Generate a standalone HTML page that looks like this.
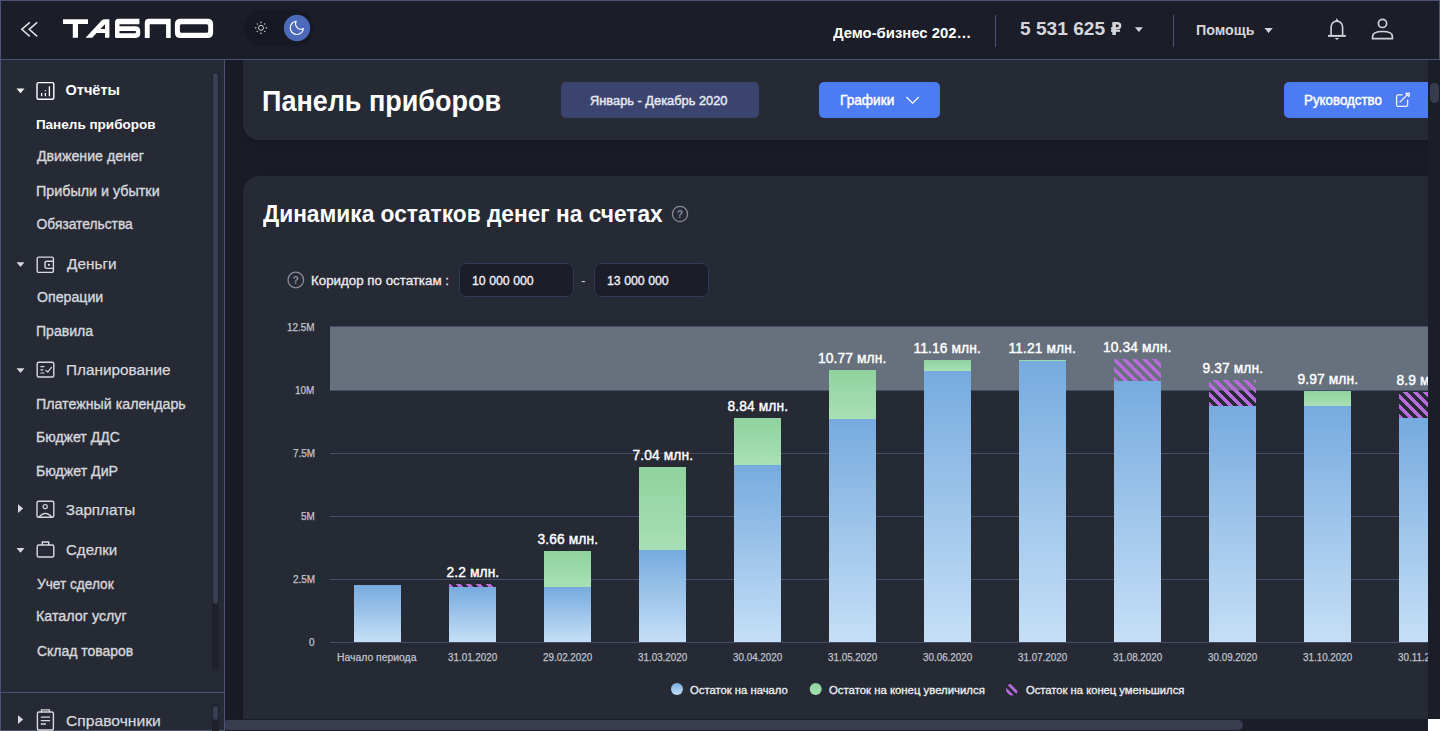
<!DOCTYPE html>
<html lang="ru">
<head>
<meta charset="utf-8">
<title>Табло — Панель приборов</title>
<style>
*{box-sizing:border-box;margin:0;padding:0}
html,body{width:1440px;height:731px;overflow:hidden;background:#1a1c28}
body{position:relative;font-family:"Liberation Sans",sans-serif;color:#fff}
.abs{position:absolute}
.t{position:absolute;line-height:1;white-space:nowrap;transform-origin:0 0}
/* header */
.header{position:absolute;left:0;top:0;width:1440px;height:60px;background:#1b1d29;box-shadow:inset 0 0 0 1px #4b5373}
.vdiv{position:absolute;width:1px;top:15px;height:32px;background:#4a5373}
/* sidebar */
.sidebar{position:absolute;left:0;top:60px;width:225px;height:671px;background:#262a35;box-shadow:inset 1px 0 #4b5373,inset -1px 0 #4b5373,inset 0 -1px #4b5373}
.sep{position:absolute;left:0;top:692px;width:224px;height:1px;background:#4b5373}
.strack{position:absolute;left:212px;width:7px;border-radius:4px;background:#1f222b}
.sthumb{position:absolute;left:213px;width:5px;border-radius:3px;background:#393e50}
/* main */
.clip{position:absolute;left:225px;top:60px;width:1203px;height:659px;overflow:hidden;background:#1a1c28}
.inner{position:absolute;left:-225px;top:-60px;width:1440px;height:731px}
.card{position:absolute;background:#262a35;box-shadow:0 3px 16px rgba(6,7,14,.2)}
.btn{position:absolute;border-radius:5px}
.inp{position:absolute;background:#1b1d29;border:1px solid #323953;border-radius:7px}
.grid{position:absolute;left:330px;width:1100px;height:1px;background:#464d6a}
.band{position:absolute;left:330px;top:327px;width:1100px;height:63px;background:#67717e}
.bar{position:absolute;width:47px}
.blue{background:linear-gradient(#76abdf,#c6dff6)}
.green{background:linear-gradient(#8fd39e,#a8e0b5)}
.hatch{background:repeating-linear-gradient(45deg,#b76ad9 0 3.5px,transparent 3.5px 7px)}
/* scrollbars */
.vscroll{position:absolute;left:1428px;top:60px;width:12px;height:659px;background:#1b1d29}
.hscroll{position:absolute;left:225px;top:719px;width:1203px;height:12px;background:#1b1d29}
.thumb{position:absolute;background:#373c4f;border-radius:6px}
.corner{position:absolute;left:1428px;top:719px;width:12px;height:12px;background:#ffffff}
svg{position:absolute;overflow:visible}
</style>
</head>
<body>
<header class="header">
  <svg style="left:0;top:0" width="1440" height="59" viewBox="0 0 1440 59">
    <g fill="none" stroke="#dcdcdc" stroke-width="1.6" stroke-linecap="square">
      <path d="M29.2 22.8 L21.8 29.3 L29.2 35.9"/>
      <path d="M36.6 22.8 L29.2 29.3 L36.6 35.9"/>
    </g>
    <g fill="#ffffff">
      <!-- Т -->
      <path d="M63 19.2 H88 V23.9 H78 V37.8 H72.8 V23.9 H63 Z"/>
      <!-- А -->
      <path fill-rule="evenodd" d="M85.6 37.8 L101.6 20.6 Q103 19.2 105 19.2 H109.4 V37.8 H105 V33 H96.6 L92.2 37.8 Z M100.4 28.9 L105 24.2 V28.9 Z"/>
      <!-- Б -->
      <path fill-rule="evenodd" d="M118.5 18.8 H139.4 V24.2 H119.5 V26.3 H135.5 Q140.2 26.3 140.2 31 V33.5 Q140.2 37.9 135.8 37.9 H116.5 Q115 37.9 115 36.4 V22.3 Q115 18.8 118.5 18.8 Z M119.5 31 V33.2 H135.8 V31 Z"/>
      <!-- П -->
      <path d="M149 18.8 H170.7 V37.9 H166.1 V24.2 H149.7 V37.9 H144.8 V23 Q144.8 18.8 149 18.8 Z"/>
      <!-- О -->
      <path fill-rule="evenodd" d="M180.5 18.8 H207.6 Q213.1 18.8 213.1 24.3 V32.4 Q213.1 37.9 207.6 37.9 H180.5 Q174.9 37.9 174.9 32.4 V24.3 Q174.9 18.8 180.5 18.8 Z M181.4 24.2 Q179.9 24.2 179.9 25.7 V31.2 Q179.9 32.7 181.4 32.7 H206.7 Q208.2 32.7 208.2 31.2 V25.7 Q208.2 24.2 206.7 24.2 Z"/>
    </g>
    <!-- theme toggle -->
    <rect x="243.5" y="10.5" width="70.5" height="35" rx="17.5" fill="#161822"/>
    <circle cx="261" cy="27.8" r="2.5" fill="none" stroke="#cfcfd4" stroke-width="1"/>
    <g fill="#bdbdc2">
      <rect x="260.3" y="21.6" width="1.4" height="1.5"/>
      <rect x="260.3" y="32.6" width="1.4" height="1.5"/>
      <rect x="254.9" y="27.1" width="1.5" height="1.4"/>
      <rect x="265.6" y="27.1" width="1.5" height="1.4"/>
      <circle cx="257.3" cy="24.1" r="0.75"/>
      <circle cx="264.7" cy="24.1" r="0.75"/>
      <circle cx="257.3" cy="31.5" r="0.75"/>
      <circle cx="264.7" cy="31.5" r="0.75"/>
    </g>
    <circle cx="297" cy="28" r="13.2" fill="#4b6ab9"/>
    <path d="M296.2 21.3 A6.6 6.6 0 1 0 303.4 28.6 A5.4 5.4 0 0 1 296.2 21.3 Z" fill="none" stroke="#ffffff" stroke-width="1.15" stroke-linejoin="round"/>
    <!-- carets -->
    <path d="M1134.9 27.2 H1142.9 L1138.9 32 Z" fill="#d6d6da"/>
    <path d="M1264.4 28 H1272.8 L1268.6 33 Z" fill="#d6d6da"/>
    <!-- ruble sign -->
    <g fill="none" stroke="#d6d6da">
      <path d="M1114.1 35 V22.1" stroke-width="3.6"/>
      <path d="M1114 23.3 H1117.2 Q1120.1 23.3 1120.1 25.8 Q1120.1 28.4 1117.2 28.4 H1111" stroke-width="2.4"/>
      <path d="M1111 30.8 H1120" stroke-width="2"/>
    </g>
    <!-- bell -->
    <g fill="none" stroke="#d2d2d6" stroke-width="1.6" stroke-linejoin="round">
      <path d="M1331.1 35.2 V26.9 A5.75 5.75 0 0 1 1342.6 26.9 V35.2"/>
      <path d="M1328 35.9 H1345.8" stroke-width="2"/>
    </g>
    <path d="M1335.4 21.2 L1336.9 17.9 L1338.4 21.2 Z" fill="#d2d2d6"/>
    <path d="M1334.6 38 H1339.2 L1336.9 40 Z" fill="#d2d2d6"/>
    <!-- user -->
    <g fill="none" stroke="#d2d2d6" stroke-width="1.7">
      <circle cx="1382.5" cy="23.4" r="4.1"/>
      <path d="M1372.6 38.7 V36.4 Q1372.6 31.5 1382.5 31.5 Q1392.4 31.5 1392.4 36.4 V38.7 Z"/>
    </g>
  </svg>
  <div class="vdiv" style="left:995px"></div>
  <div class="vdiv" style="left:1173px"></div>
  <span class="t" style="left:833.00px;top:25px;font-size:15.12px;font-weight:bold;color:#ffffff;transform:scaleX(0.9820);">Демо-бизнес 202…</span>
  <span class="t" style="left:1019.99px;top:20px;font-size:18.9px;font-weight:bold;color:#d6d6da;transform:scaleX(1.0120);">5 531 625</span>
  <span class="t" style="left:1196.05px;top:23px;font-size:14.97px;font-weight:bold;color:#d6d6da;transform:scaleX(0.9500);">Помощь</span>
</header>

<nav class="sidebar">
  <div class="strack" style="top:12px;height:599px"></div>
  <div class="sthumb" style="top:13px;height:531px"></div>
  <div class="strack" style="top:644px;height:40px"></div>
  <div class="sthumb" style="top:646px;height:14px"></div>
  <div class="sep" style="top:632px"></div>
</nav>
<div class="abs" style="left:0;top:0">
  <svg style="left:0;top:0" width="225" height="731" viewBox="0 0 225 731">
    <path d="M16.5 88.5 H24.5 L20.5 93.2 Z" fill="#f4f4f6"/>
    <g fill="#d8d9dd">
      <path d="M16.5 262.2 H24.5 L20.5 266.9 Z"/>
      <path d="M16.5 368.2 H24.5 L20.5 372.9 Z"/>
      <path d="M18 504.3 L23.2 508.6 L18 512.9 Z"/>
      <path d="M16.5 548 H24.5 L20.5 552.7 Z"/>
      <path d="M18 715.3 L23.2 719.6 L18 723.9 Z"/>
    </g>
    <g fill="none" stroke-width="1.4">
      <!-- reports icon -->
      <rect x="37" y="82.6" width="16.8" height="16.6" rx="1.5" stroke="#ffffff"/>
      <path d="M41.6 93 V96.3 M45.4 90.3 V91.3 M45.4 93 V96.3 M49.4 86.2 V96.3" stroke="#ffffff" stroke-width="1.3"/>
      <!-- wallet -->
      <rect x="37.2" y="257.1" width="16.2" height="15.3" rx="1.5" stroke="#d8d9dd"/>
      <path d="M53.8 261.2 H46.8 Q45 261.2 45 263 V266.6 Q45 268.4 46.8 268.4 H53.8" stroke="#d8d9dd"/>
      <circle cx="48.9" cy="264.8" r="1.1" fill="#d8d9dd" stroke="none"/>
      <!-- planning -->
      <rect x="37.2" y="362.2" width="16.6" height="14.8" rx="1.5" stroke="#d8d9dd"/>
      <path d="M40.4 366.6 H44.4 M40.4 369.8 H43.4 M40.4 373 H44.4 M45.6 370 L47.8 372.2 L51.6 367.2" stroke="#d8d9dd" stroke-width="1.2"/>
      <!-- salary -->
      <rect x="37" y="501.2" width="16.8" height="16" rx="1.5" stroke="#d8d9dd"/>
      <circle cx="45.2" cy="506.6" r="2.1" stroke="#d8d9dd" stroke-width="1.2"/>
      <path d="M38.8 517.2 Q45.4 509.6 52 517.2" stroke="#d8d9dd" stroke-width="1.3"/>
      <!-- briefcase -->
      <rect x="37.2" y="545" width="16.6" height="12" rx="1.5" stroke="#d8d9dd"/>
      <path d="M42.3 545 V542 H48.7 V545" stroke="#d8d9dd"/>
      <!-- clipboard -->
      <rect x="37.4" y="712" width="16" height="18" rx="1.5" stroke="#d8d9dd"/>
      <path d="M41.4 712.2 V709.8 H49.4 V712.2 M40.8 717.2 H50 M40.8 720.6 H50 M40.8 724 H46" stroke="#d8d9dd" stroke-width="1.3"/>
    </g>
  </svg>
  <span class="t" style="left:65.50px;top:83px;font-size:14.53px;font-weight:bold;color:#ffffff;">Отчёты</span>
  <span class="t" style="left:35.90px;top:118px;font-size:13.52px;font-weight:bold;color:#ffffff;">Панель приборов</span>
  <span class="t" style="left:36.60px;top:150px;font-size:13.81px;font-weight:normal;color:#d6d7db;transform:scaleX(1.0260);-webkit-text-stroke:0.35px currentColor">Движение денег</span>
  <span class="t" style="left:35.56px;top:185px;font-size:13.81px;font-weight:normal;color:#d6d7db;transform:scaleX(1.0373);-webkit-text-stroke:0.35px currentColor">Прибыли и убытки</span>
  <span class="t" style="left:36.60px;top:218px;font-size:13.81px;font-weight:normal;color:#d6d7db;-webkit-text-stroke:0.35px currentColor">Обязательства</span>
  <span class="t" style="left:36.60px;top:291px;font-size:13.81px;font-weight:normal;color:#d6d7db;transform:scaleX(1.0266);-webkit-text-stroke:0.35px currentColor">Операции</span>
  <span class="t" style="left:35.58px;top:325px;font-size:13.81px;font-weight:normal;color:#d6d7db;transform:scaleX(1.0200);-webkit-text-stroke:0.35px currentColor">Правила</span>
  <span class="t" style="left:35.57px;top:398px;font-size:13.81px;font-weight:normal;color:#d6d7db;transform:scaleX(1.0306);-webkit-text-stroke:0.35px currentColor">Платежный календарь</span>
  <span class="t" style="left:35.58px;top:431px;font-size:13.81px;font-weight:normal;color:#d6d7db;transform:scaleX(1.0173);-webkit-text-stroke:0.35px currentColor">Бюджет ДДС</span>
  <span class="t" style="left:35.57px;top:465px;font-size:13.81px;font-weight:normal;color:#d6d7db;transform:scaleX(1.0253);-webkit-text-stroke:0.35px currentColor">Бюджет ДиР</span>
  <span class="t" style="left:36.60px;top:578px;font-size:13.81px;font-weight:normal;color:#d6d7db;transform:scaleX(0.9897);-webkit-text-stroke:0.35px currentColor">Учет сделок</span>
  <span class="t" style="left:35.56px;top:610px;font-size:13.81px;font-weight:normal;color:#d6d7db;transform:scaleX(1.0356);-webkit-text-stroke:0.35px currentColor">Каталог услуг</span>
  <span class="t" style="left:36.60px;top:645px;font-size:13.81px;font-weight:normal;color:#d6d7db;transform:scaleX(1.0095);-webkit-text-stroke:0.35px currentColor">Склад товаров</span>
  <span class="t" style="left:66.70px;top:256px;font-size:15.26px;font-weight:normal;color:#d8d9dd;transform:scaleX(1.0061);-webkit-text-stroke:0.25px currentColor">Деньги</span>
  <span class="t" style="left:65.70px;top:362px;font-size:15.26px;font-weight:normal;color:#d8d9dd;transform:scaleX(1.0039);-webkit-text-stroke:0.25px currentColor">Планирование</span>
  <span class="t" style="left:65.70px;top:502px;font-size:15.26px;font-weight:normal;color:#d8d9dd;-webkit-text-stroke:0.25px currentColor">Зарплаты</span>
  <span class="t" style="left:65.71px;top:542px;font-size:15.26px;font-weight:normal;color:#d8d9dd;transform:scaleX(0.9860);-webkit-text-stroke:0.25px currentColor">Сделки</span>
  <span class="t" style="left:65.67px;top:713px;font-size:15.26px;font-weight:normal;color:#d8d9dd;transform:scaleX(1.0253);-webkit-text-stroke:0.25px currentColor">Справочники</span>
</div>

<main class="clip">
  <div class="inner">
    <section class="card" style="left:243px;top:20px;width:1250px;height:120px;border-radius:16px"></section>
    <div class="btn" style="left:561px;top:82px;width:198px;height:36px;background:#3a446f"></div>
    <div class="btn" style="left:819px;top:82px;width:121px;height:36px;background:#4b7cf3"></div>
    <div class="btn" style="left:1284px;top:82px;width:160px;height:36px;background:#4b7cf3"></div>
    <svg style="left:0;top:0" width="1440" height="731" viewBox="0 0 1440 731">
      <path d="M906.4 97 L912.6 103.2 L918.8 97" fill="none" stroke="#ffffff" stroke-width="1.1"/>
      <g fill="none" stroke="#f2f4ff" stroke-width="1.3" stroke-linejoin="round">
        <path d="M1402.7 94.9 H1398.2 Q1396.6 94.9 1396.6 96.5 V104.7 Q1396.6 106.3 1398.2 106.3 H1406 Q1407.6 106.3 1407.6 104.7 V99.8"/>
        <path d="M1399.6 102.4 L1407.4 94.6"/>
        <path d="M1405.8 93.4 L1409.3 93.1 L1409 96.6 Z" stroke-width="1.2"/>
      </g>
    </svg>

    <section class="card" style="left:243px;top:176px;width:1250px;height:600px;border-radius:16px"></section>
    <svg style="left:0;top:0" width="1440" height="731" viewBox="0 0 1440 731">
      <g fill="none" stroke="#8a8c96" stroke-width="1.3">
        <circle cx="680" cy="214" r="7.6"/>
        <circle cx="295.8" cy="280" r="7.8"/>
      </g>
      <g fill="#8a8c96" font-family="Liberation Sans" font-weight="bold" font-size="10.5" text-anchor="middle">
        <text x="680" y="218">?</text>
        <text x="295.8" y="284">?</text>
      </g>
    </svg>
    <div class="inp" style="left:459px;top:263px;width:115px;height:34px"></div>
    <div class="inp" style="left:594px;top:263px;width:115px;height:34px"></div>

    <!-- chart -->
    <div class="band"></div>
    <div class="grid" style="top:326px"></div>
    <div class="grid" style="top:390px"></div>
    <div class="grid" style="top:453px"></div>
    <div class="grid" style="top:516px"></div>
    <div class="grid" style="top:579px"></div>
    <div class="grid" style="top:642px"></div>
    <div class="bar blue" style="left:354px;top:584.9px;height:57.10px"></div>
    <div class="bar blue" style="left:449px;top:587px;height:55.00px"></div>
    <div class="bar hatch" style="left:449px;top:583.7px;height:3.30px"></div>
    <div class="bar blue" style="left:544px;top:587px;height:55.00px"></div>
    <div class="bar green" style="left:544px;top:550.9px;height:36.10px"></div>
    <div class="bar blue" style="left:639px;top:550px;height:92.00px"></div>
    <div class="bar green" style="left:639px;top:466.8px;height:83.20px"></div>
    <div class="bar blue" style="left:734px;top:465px;height:177.00px"></div>
    <div class="bar green" style="left:734px;top:417.75px;height:47.25px"></div>
    <div class="bar blue" style="left:829px;top:418.8px;height:223.20px"></div>
    <div class="bar green" style="left:829px;top:369.9px;height:48.90px"></div>
    <div class="bar blue" style="left:924px;top:371.1px;height:270.90px"></div>
    <div class="bar green" style="left:924px;top:359.8px;height:11.30px"></div>
    <div class="bar blue" style="left:1019px;top:361px;height:281.00px"></div>
    <div class="bar green" style="left:1019px;top:359.8px;height:1.20px"></div>
    <div class="bar blue" style="left:1114px;top:380.7px;height:261.30px"></div>
    <div class="bar hatch" style="left:1114px;top:358.9px;height:21.80px"></div>
    <div class="bar blue" style="left:1209px;top:405.8px;height:236.20px"></div>
    <div class="bar hatch" style="left:1209px;top:380px;height:25.80px"></div>
    <div class="bar blue" style="left:1304px;top:405.8px;height:236.20px"></div>
    <div class="bar green" style="left:1304px;top:390.8px;height:15.00px"></div>
    <div class="bar blue" style="left:1399px;top:418px;height:224.00px"></div>
    <div class="bar hatch" style="left:1399px;top:392px;height:26.00px"></div>
    <svg style="left:0;top:0" width="1440" height="731" viewBox="0 0 1440 731">
      <defs>
        <linearGradient id="lg1" x1="0" y1="0" x2="0" y2="1"><stop offset="0" stop-color="#76abdf"/><stop offset="1" stop-color="#c6dff6"/></linearGradient>
        <linearGradient id="lg2" x1="0" y1="0" x2="0" y2="1"><stop offset="0" stop-color="#8fd39e"/><stop offset="1" stop-color="#a8e0b5"/></linearGradient>
        <clipPath id="cp3"><circle cx="1012" cy="689.4" r="6"/></clipPath>
      </defs>
      <circle cx="677" cy="689" r="6" fill="url(#lg1)"/>
      <circle cx="815.7" cy="689" r="6" fill="url(#lg2)"/>
      <g clip-path="url(#cp3)" stroke="#b76ad9" stroke-width="2.8">
        <path d="M1005.5 681 L1021.5 697 M1001.5 685 L1013.5 697"/>
      </g>
    </svg>
    <span class="t" style="left:262.39px;top:86px;font-size:29.8px;font-weight:bold;color:#ffffff;transform:scaleX(0.9057);">Панель приборов</span>
  <span class="t" style="left:590.28px;top:94px;font-size:13.23px;font-weight:normal;color:#e6e8f2;transform:scaleX(0.9699);-webkit-text-stroke:0.45px currentColor">Январь - Декабрь 2020</span>
  <span class="t" style="left:839.61px;top:94px;font-size:13.81px;font-weight:normal;color:#ffffff;transform:scaleX(0.9906);-webkit-text-stroke:0.45px currentColor">Графики</span>
  <span class="t" style="left:1304.43px;top:94px;font-size:13.81px;font-weight:normal;color:#ffffff;transform:scaleX(0.9662);-webkit-text-stroke:0.45px currentColor">Руководство</span>
  <span class="t" style="left:263.00px;top:203px;font-size:23.69px;font-weight:bold;color:#ffffff;transform:scaleX(0.9591);">Динамика остатков денег на счетах</span>
  <span class="t" style="left:311.22px;top:274px;font-size:13.66px;font-weight:normal;color:#eeeef2;transform:scaleX(0.9754);-webkit-text-stroke:0.3px currentColor">Коридор по остаткам :</span>
  <span class="t" style="left:471.60px;top:274px;font-size:13.66px;font-weight:normal;color:#f0f0f4;transform:scaleX(0.9030);-webkit-text-stroke:0.35px currentColor">10 000 000</span>
  <span class="t" style="left:581.00px;top:274px;font-size:13.66px;font-weight:normal;color:#d0d0d4;">-</span>
  <span class="t" style="left:606.60px;top:274px;font-size:13.66px;font-weight:normal;color:#f0f0f4;transform:scaleX(0.9030);-webkit-text-stroke:0.35px currentColor">13 000 000</span>
  <span class="t" style="left:287.30px;top:322px;font-size:11.05px;font-weight:normal;color:#c4c5cb;transform:scaleX(0.9000);-webkit-text-stroke:0.25px currentColor">12.5M</span>
  <span class="t" style="left:295.40px;top:385px;font-size:11.05px;font-weight:normal;color:#c4c5cb;transform:scaleX(0.9000);-webkit-text-stroke:0.25px currentColor">10M</span>
  <span class="t" style="left:292.70px;top:448px;font-size:11.05px;font-weight:normal;color:#c4c5cb;transform:scaleX(0.9000);-webkit-text-stroke:0.25px currentColor">7.5M</span>
  <span class="t" style="left:300.80px;top:511px;font-size:11.05px;font-weight:normal;color:#c4c5cb;transform:scaleX(0.9000);-webkit-text-stroke:0.25px currentColor">5M</span>
  <span class="t" style="left:292.70px;top:574px;font-size:11.05px;font-weight:normal;color:#c4c5cb;transform:scaleX(0.9000);-webkit-text-stroke:0.25px currentColor">2.5M</span>
  <span class="t" style="left:308.90px;top:637px;font-size:11.05px;font-weight:normal;color:#c4c5cb;transform:scaleX(0.9000);-webkit-text-stroke:0.25px currentColor">0</span>
  <span class="t" style="left:337.08px;top:652px;font-size:11.05px;font-weight:normal;color:#c2c3ca;transform:scaleX(0.9400);-webkit-text-stroke:0.25px currentColor">Начало периода</span>
  <span class="t" style="left:448.02px;top:652px;font-size:11.05px;font-weight:normal;color:#c2c3ca;transform:scaleX(0.8900);-webkit-text-stroke:0.25px currentColor">31.01.2020</span>
  <span class="t" style="left:446.50px;top:566px;font-size:13.81px;font-weight:normal;color:#ffffff;-webkit-text-stroke:0.4px currentColor;letter-spacing:0.1px">2.2 млн.</span>
  <span class="t" style="left:543.02px;top:652px;font-size:11.05px;font-weight:normal;color:#c2c3ca;transform:scaleX(0.8900);-webkit-text-stroke:0.25px currentColor">29.02.2020</span>
  <span class="t" style="left:537.50px;top:533px;font-size:13.81px;font-weight:normal;color:#ffffff;-webkit-text-stroke:0.4px currentColor;letter-spacing:0.1px">3.66 млн.</span>
  <span class="t" style="left:638.02px;top:652px;font-size:11.05px;font-weight:normal;color:#c2c3ca;transform:scaleX(0.8900);-webkit-text-stroke:0.25px currentColor">31.03.2020</span>
  <span class="t" style="left:632.50px;top:449px;font-size:13.81px;font-weight:normal;color:#ffffff;-webkit-text-stroke:0.4px currentColor;letter-spacing:0.1px">7.04 млн.</span>
  <span class="t" style="left:733.02px;top:652px;font-size:11.05px;font-weight:normal;color:#c2c3ca;transform:scaleX(0.8900);-webkit-text-stroke:0.25px currentColor">30.04.2020</span>
  <span class="t" style="left:727.50px;top:400px;font-size:13.81px;font-weight:normal;color:#ffffff;-webkit-text-stroke:0.4px currentColor;letter-spacing:0.1px">8.84 млн.</span>
  <span class="t" style="left:828.02px;top:652px;font-size:11.05px;font-weight:normal;color:#c2c3ca;transform:scaleX(0.8900);-webkit-text-stroke:0.25px currentColor">31.05.2020</span>
  <span class="t" style="left:818.00px;top:352px;font-size:13.81px;font-weight:normal;color:#ffffff;-webkit-text-stroke:0.4px currentColor;letter-spacing:0.1px">10.77 млн.</span>
  <span class="t" style="left:923.02px;top:652px;font-size:11.05px;font-weight:normal;color:#c2c3ca;transform:scaleX(0.8900);-webkit-text-stroke:0.25px currentColor">30.06.2020</span>
  <span class="t" style="left:913.50px;top:342px;font-size:13.81px;font-weight:normal;color:#ffffff;-webkit-text-stroke:0.4px currentColor;letter-spacing:0.1px">11.16 млн.</span>
  <span class="t" style="left:1018.02px;top:652px;font-size:11.05px;font-weight:normal;color:#c2c3ca;transform:scaleX(0.8900);-webkit-text-stroke:0.25px currentColor">31.07.2020</span>
  <span class="t" style="left:1008.50px;top:342px;font-size:13.81px;font-weight:normal;color:#ffffff;-webkit-text-stroke:0.4px currentColor;letter-spacing:0.1px">11.21 млн.</span>
  <span class="t" style="left:1113.03px;top:652px;font-size:11.05px;font-weight:normal;color:#c2c3ca;transform:scaleX(0.8900);-webkit-text-stroke:0.25px currentColor">31.08.2020</span>
  <span class="t" style="left:1103.00px;top:341px;font-size:13.81px;font-weight:normal;color:#ffffff;-webkit-text-stroke:0.4px currentColor;letter-spacing:0.1px">10.34 млн.</span>
  <span class="t" style="left:1208.03px;top:652px;font-size:11.05px;font-weight:normal;color:#c2c3ca;transform:scaleX(0.8900);-webkit-text-stroke:0.25px currentColor">30.09.2020</span>
  <span class="t" style="left:1202.50px;top:362px;font-size:13.81px;font-weight:normal;color:#ffffff;-webkit-text-stroke:0.4px currentColor;letter-spacing:0.1px">9.37 млн.</span>
  <span class="t" style="left:1303.03px;top:652px;font-size:11.05px;font-weight:normal;color:#c2c3ca;transform:scaleX(0.8900);-webkit-text-stroke:0.25px currentColor">31.10.2020</span>
  <span class="t" style="left:1297.50px;top:373px;font-size:13.81px;font-weight:normal;color:#ffffff;-webkit-text-stroke:0.4px currentColor;letter-spacing:0.1px">9.97 млн.</span>
  <span class="t" style="left:1398.47px;top:652px;font-size:11.05px;font-weight:normal;color:#c2c3ca;transform:scaleX(0.8900);-webkit-text-stroke:0.25px currentColor">30.11.2020</span>
  <span class="t" style="left:1396.50px;top:374px;font-size:13.81px;font-weight:normal;color:#ffffff;-webkit-text-stroke:0.4px currentColor;letter-spacing:0.1px">8.9 млн.</span>
  <span class="t" style="left:690.00px;top:685px;font-size:10.76px;font-weight:normal;color:#eeeef2;transform:scaleX(1.0484);-webkit-text-stroke:0.3px currentColor">Остаток на начало</span>
  <span class="t" style="left:828.70px;top:685px;font-size:10.76px;font-weight:normal;color:#eeeef2;transform:scaleX(1.0565);-webkit-text-stroke:0.3px currentColor">Остаток на конец увеличился</span>
  <span class="t" style="left:1025.70px;top:685px;font-size:10.76px;font-weight:normal;color:#eeeef2;transform:scaleX(1.0431);-webkit-text-stroke:0.3px currentColor">Остаток на конец уменьшился</span>
  </div>
</main>

<div class="vscroll"><div class="thumb" style="left:1.5px;top:23px;width:9px;height:20px;border-radius:5px"></div></div>
<div class="hscroll"><div class="thumb" style="left:0;top:1px;width:1018px;height:10px;border-radius:2px 5px 5px 2px"></div></div>
<div class="corner"></div>
</body>
</html>
